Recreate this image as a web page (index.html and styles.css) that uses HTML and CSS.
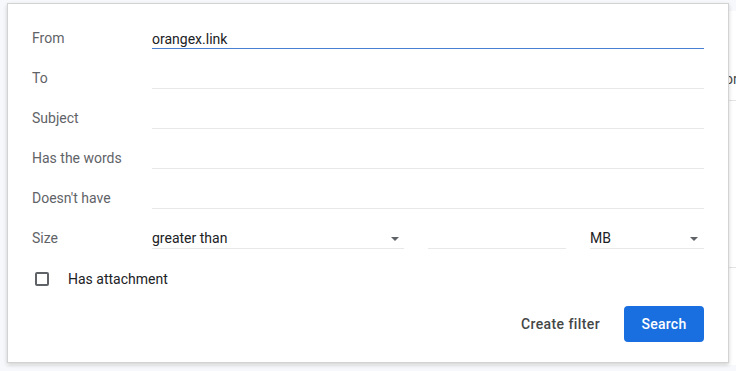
FILE: index.html
```html
<!DOCTYPE html>
<html lang="en">
<head>
  <meta charset="UTF-8">
  <meta name="viewport" content="width=device-width, initial-scale=1.0">
  <title>Search options</title>
  <link rel="stylesheet" href="styles.css">
</head>
<body>
  <div class="page">
    <div class="topbar"></div>
    <div class="content">
      <div class="side"></div>
      <div class="main">
        <div class="list-row first"><span class="peek">or</span></div>
        <div class="list-row second"></div>
      </div>
    </div>
  </div>

  <div class="dialog">
    <div class="row">
      <label class="label" for="from">From</label>
      <input class="field active" id="from" type="text" value="orangex.link">
    </div>
    <div class="row">
      <label class="label" for="to">To</label>
      <input class="field" id="to" type="text">
    </div>
    <div class="row">
      <label class="label" for="subject">Subject</label>
      <input class="field" id="subject" type="text">
    </div>
    <div class="row">
      <label class="label" for="words">Has the words</label>
      <input class="field" id="words" type="text">
    </div>
    <div class="row">
      <label class="label" for="without">Doesn't have</label>
      <input class="field" id="without" type="text">
    </div>
    <div class="row">
      <span class="label">Size</span>
      <div class="size">
        <div class="select op">
          <span>greater than</span>
          <span class="arrow"></span>
        </div>
        <input class="field amount" type="text">
        <div class="select unit">
          <span>MB</span>
          <span class="arrow"></span>
        </div>
      </div>
    </div>
    <div class="row check-row">
      <span class="box"></span>
      <span class="check-label">Has attachment</span>
    </div>
    <div class="actions">
      <button class="text-btn">Create filter</button>
      <button class="primary">Search</button>
    </div>
  </div>
</body>
</html>
```

FILE: styles.css
```css
* {
  box-sizing: border-box;
}
body {
  margin: 0;
  font-family: Roboto, "Liberation Sans", Arial, sans-serif;
  font-size: 14px;
  background-color: #f6f8fc;
  width: 736px;
  height: 371px;
  overflow: hidden;
}
.page {
  height: 371px;
  display: flex;
  flex-direction: column;
}
.topbar {
  height: 11px;
}
.content {
  flex: 1;
  display: flex;
}
.side {
  flex: none;
  width: 7px;
}
.main {
  flex: 1;
  min-width: 0;
  background: #fff;
  margin-bottom: 6px;
}
.list-row {
  border-bottom: 1px solid #e3e3e3;
  padding-left: 718px;
  color: #444746;
}
.list-row.first {
  height: 90px;
  padding-top: 58px;
  line-height: 20px;
}
.peek {
  display: block;
  width: 11px;
  overflow: hidden;
}
.list-row.second {
  height: 167px;
}

/* dialog */
.dialog {
  position: absolute;
  left: 7px;
  top: 3px;
  width: 722px;
  height: 360px;
  background: #fff;
  border: 1px solid #d3d3d3;
  box-shadow: 0 2px 4px rgba(0,0,0,0.18);
  padding: 5px 24px 0 24px;
}
.row {
  height: 40px;
  display: flex;
  align-items: flex-end;
}
.label {
  flex: none;
  width: 120px;
  color: #5f6368;
  line-height: 20px;
  padding-bottom: 1px;
}
.field {
  flex: 1;
  min-width: 0;
  height: 20px;
  border: none;
  border-bottom: 1px solid #e8e8e8;
  padding: 0;
  font: inherit;
  line-height: 19px;
  color: #202124;
  outline: none;
  background: transparent;
}
.field.active {
  border-bottom-color: #4a7fd6;
}
.size {
  flex: 1;
  min-width: 0;
  display: flex;
  gap: 24px;
}
.select {
  height: 20px;
  line-height: 19px;
  border-bottom: 1px solid #e8e8e8;
  color: #202124;
  display: flex;
  justify-content: space-between;
  align-items: center;
}
.select.op {
  flex: none;
  width: 252px;
}
.select.unit {
  flex: 1;
  padding-right: 2px;
}
.field.amount {
  flex: none;
  width: 138px;
}
.arrow {
  width: 0;
  height: 0;
  border-left: 4px solid transparent;
  border-right: 4px solid transparent;
  border-top: 4px solid #5f6368;
  margin-right: 5px;
  margin-top: 1px;
}
.select.unit .arrow {
  margin-right: 4px;
}
.check-row {
  align-items: center;
  padding-top: 20px;
}
.box {
  width: 14px;
  height: 14px;
  border: 2px solid #5f6368;
  border-radius: 2px;
  margin-left: 3px;
}
.check-label {
  margin-left: 19px;
  color: #202124;
  line-height: 20px;
}
.actions {
  display: flex;
  justify-content: flex-end;
  align-items: center;
  margin-top: 17px;
  gap: 8px;
}
.text-btn {
  background: none;
  border: none;
  font: inherit;
  font-weight: 500;
  letter-spacing: 0.4px;
  color: #444746;
  padding: 0 16px;
  height: 36px;
}
.primary {
  width: 80px;
  height: 36px;
  background: #1a6fe0;
  color: #fff;
  border: none;
  border-radius: 4px;
  font: inherit;
  font-weight: 500;
  letter-spacing: 0.25px;
}
```
